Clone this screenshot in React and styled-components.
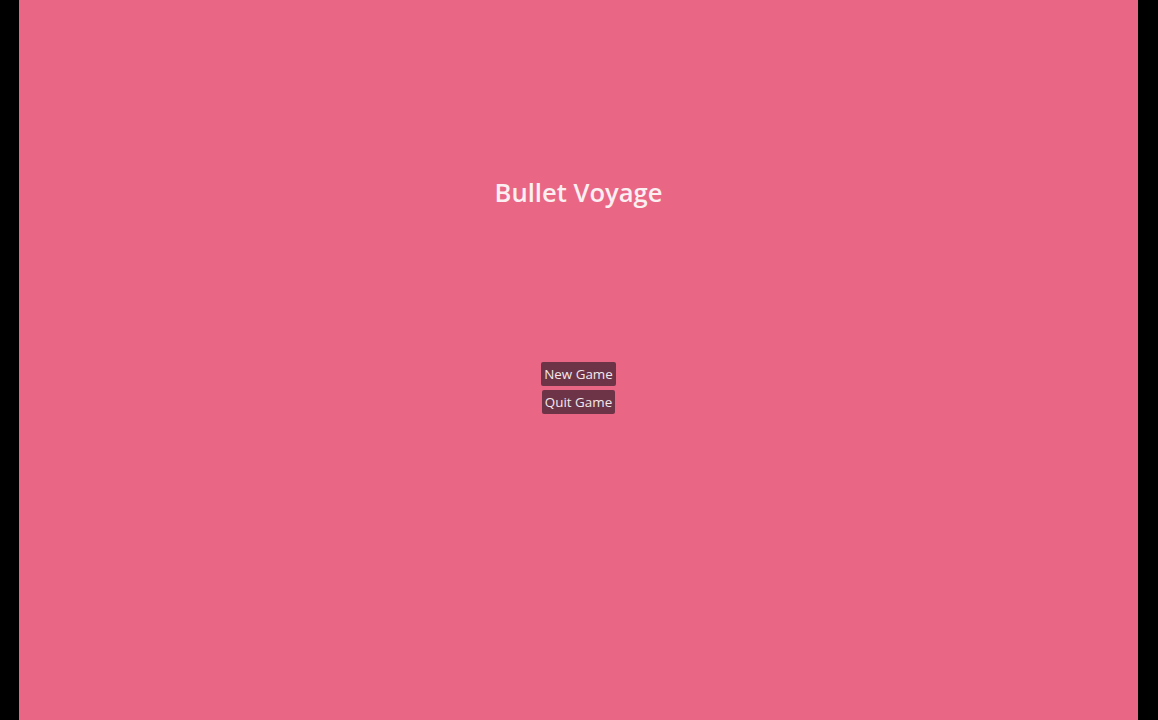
import React from "react";
import styled, { createGlobalStyle } from "styled-components";

const Global = createGlobalStyle`
  html, body { margin: 0; padding: 0; background: #000; }
  body { font-family: "Open Sans", "Noto Sans", sans-serif; }
`;

const Screen = styled.div`
  width: 1119px;
  height: 720px;
  margin-left: 19px;
  background: #e96785;
  display: flex;
  flex-direction: column;
  align-items: center;
`;

const Title = styled.h1`
  margin: 175px 0 0;
  font-size: 25.6px;
  font-weight: 600;
  line-height: 36px;
  color: #fbeff2;
`;

const Menu = styled.div`
  margin-top: 151px;
  display: flex;
  flex-direction: column;
  align-items: center;
  gap: 4px;
`;

const MenuButton = styled.button`
  font-family: "Open Sans", "Noto Sans", sans-serif;
  font-size: 13.4px;
  font-weight: 500;
  line-height: 23px;
  height: 24px;
  padding: 0 3px;
  border: none;
  border-radius: 2px;
  background: #6d3448;
  color: #f2e8ec;
  cursor: pointer;
`;

export default function App() {
  return (
    <>
      <Global />
      <Screen>
        <Title>Bullet Voyage</Title>
        <Menu>
          <MenuButton>New Game</MenuButton>
          <MenuButton>Quit Game</MenuButton>
        </Menu>
      </Screen>
    </>
  );
}
